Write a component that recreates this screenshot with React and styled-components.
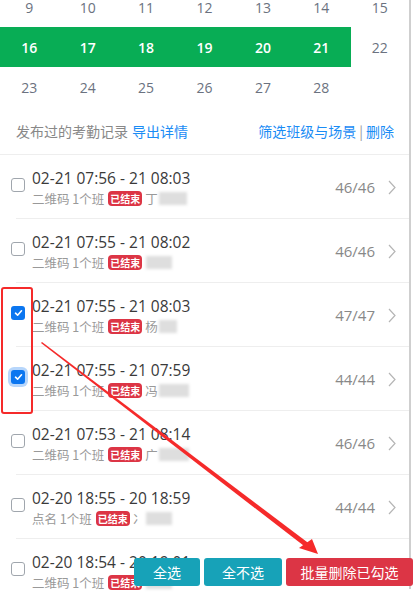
import React from "react";
import styled, { createGlobalStyle } from "styled-components";

const Global = createGlobalStyle`
  html, body { margin: 0; padding: 0; background: #fff; overflow: hidden; }
  body { font-family: "Noto Sans CJK SC", "Noto Sans", sans-serif; }
`;

const LATIN = `"Open Sans", "Noto Sans CJK SC", sans-serif`;

const Page = styled.div`
  position: relative;
  width: 414px;
  height: 602px;
  overflow: hidden;
  background: #fff;
`;

const Content = styled.div`
  width: 409px;
  height: 602px;
  border-right: 2px solid #cfcfcf;
  box-sizing: content-box;
`;

const Calendar = styled.div`
  margin-top: -13px;
  display: grid;
  grid-template-columns: repeat(7, 1fr);
`;

const Day = styled.div`
  height: 40px;
  display: flex;
  align-items: center;
  justify-content: center;
  font-family: ${LATIN};
  font-size: 14px;
  color: ${(p) => (p.$active ? "#fff" : "#6b7280")};
  background: ${(p) => (p.$active ? "#08ad55" : "transparent")};
  font-weight: ${(p) => (p.$active ? 600 : 400)};
`;

const Header = styled.div`
  display: flex;
  align-items: center;
  justify-content: space-between;
  height: 46px;
  margin-top: 1px;
  padding: 0 15px 0 16px;
  border-bottom: 1px solid #eee;
  font-size: 14px;
`;

const Muted = styled.span`
  color: #888;
`;

const Link = styled.span`
  color: #1a8cf5;
  margin-left: ${(p) => p.$ml || 0}px;
`;

const Sep = styled.span`
  color: #999;
  margin: 0 3px;
`;

const Row = styled.div`
  display: flex;
  align-items: center;
  height: 64px;
  margin-left: 11px;
  position: relative;
  &::after {
    content: "";
    position: absolute;
    left: 5px;
    right: 0;
    bottom: 0;
    border-bottom: 1px solid #eee;
  }
`;

const Check = styled.div`
  width: 14px;
  height: 14px;
  margin-top: -4px;
  box-sizing: border-box;
  border-radius: 3px;
  border: ${(p) => (p.$on ? "none" : "1px solid #a0a6ad")};
  background: ${(p) => (p.$on ? "#0b76f0" : "#fff")};
  display: flex;
  align-items: center;
  justify-content: center;
  flex: none;
  box-shadow: ${(p) => (p.$focus ? "0 0 0 3px #b7d6fb" : "none")};
`;

const Body = styled.div`
  flex: 1;
  margin-left: 7px;
  display: flex;
  flex-direction: column;
  gap: 1px;
`;

const Title = styled.div`
  font-family: ${LATIN};
  font-size: 15.5px;
  color: #3a3a3a;
  line-height: 22px;
`;

const Sub = styled.div`
  display: flex;
  align-items: center;
  font-size: 12.5px;
  color: #999;
  line-height: 18px;
`;

const Tag = styled.span`
  background: #dc3545;
  color: #fff;
  font-size: 10px;
  font-weight: 700;
  border-radius: 4px;
  padding: 0 2px;
  line-height: 15px;
  margin: 0 3px 0 4px;
`;

const Blur = styled.span`
  display: inline-block;
  width: ${(p) => p.$w}px;
  height: 13px;
  background: #dedede;
  filter: blur(1.5px);
  margin-left: 1px;
`;

const Count = styled.div`
  font-family: ${LATIN};
  font-size: 15px;
  color: #888;
  margin-right: 13px;
`;

const Chevron = styled.svg`
  width: 8px;
  height: 15px;
  margin-right: 13px;
  flex: none;
`;

const Annot = styled.div`
  position: absolute;
  left: 1px;
  top: 287px;
  width: 32px;
  height: 127px;
  border: 2px solid #f52a2a;
  border-radius: 3px;
  box-sizing: border-box;
  pointer-events: none;
`;

const Arrow = styled.svg`
  position: absolute;
  left: 0;
  top: 0;
  width: 414px;
  height: 602px;
  pointer-events: none;
`;

const Actions = styled.div`
  position: absolute;
  right: 1px;
  bottom: 16px;
  display: flex;
  gap: 4px;
`;

const Btn = styled.div`
  height: 28px;
  width: ${(p) => p.$w}px;
  display: flex;
  align-items: center;
  justify-content: center;
  color: #fff;
  font-size: 14px;
  border-radius: 3px;
  background: ${(p) => (p.$danger ? "#dc3545" : "#17a2b8")};
`;

const weeks = [
  [9, 10, 11, 12, 13, 14, 15],
  [16, 17, 18, 19, 20, 21, 22],
  [23, 24, 25, 26, 27, 28, ""],
];

const records = [
  { t: "02-21 07:56 - 21 08:03", s: "二维码 1个班", n: "丁", b: 28, c: "46/46" },
  { t: "02-21 07:55 - 21 08:02", s: "二维码 1个班", n: "", b: 26, c: "46/46" },
  { t: "02-21 07:55 - 21 08:03", s: "二维码 1个班", n: "杨", b: 18, c: "47/47", on: true },
  { t: "02-21 07:55 - 21 07:59", s: "二维码 1个班", n: "冯", b: 30, c: "44/44", on: true, focus: true },
  { t: "02-21 07:53 - 21 08:14", s: "二维码 1个班", n: "广", b: 30, c: "46/46" },
  { t: "02-20 18:55 - 20 18:59", s: "点名 1个班", n: "冫", b: 26, c: "44/44" },
  { t: "02-20 18:54 - 20 19:01", s: "二维码 1个班", n: "", b: 26, c: "" },
];

function Tick() {
  return (
    <svg width="9" height="8" viewBox="0 0 9 8">
      <path d="M1.5 4.2 L3.6 6.2 L7.5 1.8" fill="none" stroke="#fff" strokeWidth="1.6" strokeLinecap="round" strokeLinejoin="round" />
    </svg>
  );
}

export default function App() {
  return (
    <Page>
      <Global />
      <Content>
        <Calendar>
          {weeks.map((w, i) =>
            w.map((d, j) => (
              <Day key={`${i}-${j}`} $active={i === 1 && j < 6}>
                {d}
              </Day>
            ))
          )}
        </Calendar>
        <Header>
          <div>
            <Muted>发布过的考勤记录</Muted>
            <Link $ml={4}>导出详情</Link>
          </div>
          <div>
            <Link>筛选班级与场景</Link>
            <Sep>|</Sep>
            <Link>删除</Link>
          </div>
        </Header>
        {records.map((r, i) => (
          <Row key={i}>
            <Check $on={r.on} $focus={r.focus}>{r.on && <Tick />}</Check>
            <Body>
              <Title>{r.t}</Title>
              <Sub>
                {r.s}
                <Tag>已结束</Tag>
                {r.n}
                <Blur $w={r.b} />
              </Sub>
            </Body>
            {r.c && <Count>{r.c}</Count>}
            {r.c && (
              <Chevron viewBox="0 0 8 15">
                <path d="M1 1 L7 7.5 L1 14" fill="none" stroke="#b5b5b5" strokeWidth="1.2" />
              </Chevron>
            )}
          </Row>
        ))}
      </Content>
      <Annot />
      <Arrow viewBox="0 0 414 602">
        <polygon points="41,343 42,342 311,545 308,549" fill="#f52a2a" />
        <polygon points="318,554 299,548 312,539" fill="#f52a2a" />
      </Arrow>
      <Actions>
        <Btn $w={66}>全选</Btn>
        <Btn $w={78}>全不选</Btn>
        <Btn $w={127} $danger>批量删除已勾选</Btn>
      </Actions>
    </Page>
  );
}
